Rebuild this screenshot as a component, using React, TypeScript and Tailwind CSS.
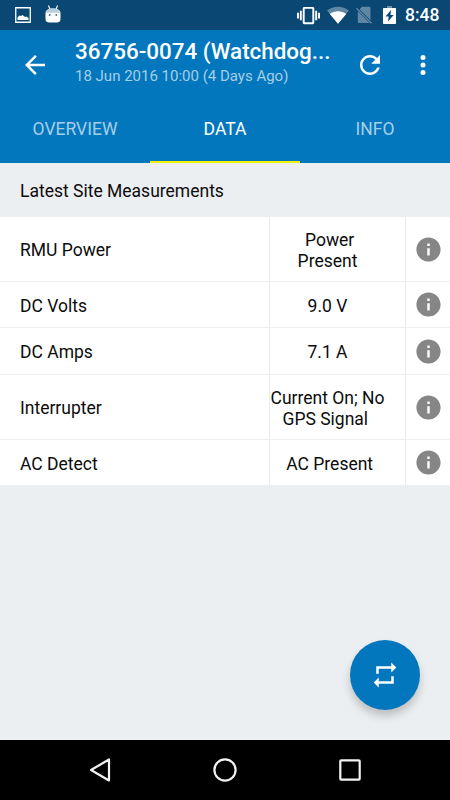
import { ReactNode } from "react";
import clsx from "clsx";

type Measurement = {
  label: string;
  lines: string[];
  height: string;
};

const measurements: Measurement[] = [
  { label: "RMU Power", lines: ["\u00a0Power", "Present"], height: "h-[65px]" },
  { label: "DC Volts", lines: ["9.0 V"], height: "h-[46px]" },
  { label: "DC Amps", lines: ["7.1 A"], height: "h-[47px]" },
  { label: "Interrupter", lines: ["Current On; No", "GPS Signal\u00a0"], height: "h-[65px]" },
  { label: "AC Detect", lines: ["\u00a0AC Present"], height: "h-[46px]" },
];

const tabs = ["OVERVIEW", "DATA", "INFO"];

const Icon = ({ className, children }: { className?: string; children: ReactNode }) => (
  <svg viewBox="0 0 24 24" fill="currentColor" className={clsx("shrink-0", className)}>
    {children}
  </svg>
);

const StatusBar = () => (
  <div className="flex h-[30px] items-center bg-[#0a4873] text-white">
    <svg viewBox="0 0 16 16" className="ml-[14.500px] size-4 shrink-0">
      <path d="M.75.75h14.5v14.5H.75z" fill="none" stroke="currentColor" strokeWidth="1.300" />
      <path d="M2.500 13v-2.500L4.500 8.500l1.500.5 1.500-1 2.500 2 1.500-.5 2 1.500v2z" fill="currentColor" />
    </svg>
    <svg viewBox="0 0 16 18" className="-mt-[2px] ml-[14.500px] h-[18px] w-4 shrink-0" fill="currentColor">
      <path d="M3.500.5l1.500 4M12.500.5l-1.500 4" stroke="currentColor" strokeWidth="1.100" />
      <path d="M.5 8.500C.5 5 3 3.500 8 3.500s7.500 1.500 7.500 5v5c0 3-1.500 4-4 4h-7c-2.500 0-4-1-4-4z" />
      <path d="M1.500 6C3 4.300 5 3.500 8 3.500S13 4.300 14.500 6L15 7.800H1z" fill="#b9cedd" />
      <circle cx="4.700" cy="10" r="1" fill="#47708f" />
      <circle cx="11.300" cy="10" r="1" fill="#47708f" />
    </svg>
    <Icon className="ml-auto size-[23px]">
      <path d="M0 15h2V9H0v6zm3 2h2V7H3v10zm19-8v6h2V9h-2zm-3 8h2V7h-2v10zM16.500 3h-9C6.670 3 6 3.670 6 4.500v15c0 .83.67 1.500 1.500 1.500h9c.83 0 1.500-.67 1.500-1.500v-15c0-.83-.67-1.500-1.500-1.500zM16 19H8V5h8v14z" />
    </Icon>
    <svg viewBox="0 0 22 18" className="ml-[7px] h-[18px] w-[22px] shrink-0" fill="currentColor">
      <path d="M0 4.500C6-.6 16-.6 22 4.500L11 17.700z" opacity=".35" />
      <path d="M2.800 8C7.500 4.200 14.500 4.200 19.200 8L11 17.700z" />
    </svg>
    <svg viewBox="0 0 16 18" className="ml-[7px] h-[18px] w-4 shrink-0" fill="currentColor">
      <path d="M6 .8h7c1 0 1.500.5 1.500 1.500v12L3.600 3.200zM1.800 5.200L13.600 17H3.300c-1 0-1.500-.5-1.500-1.500z" opacity=".35" />
      <path d="M.5 2.200l15 15" stroke="currentColor" strokeWidth="1.300" opacity=".35" />
    </svg>
    <svg viewBox="0 0 13 18" className="ml-[11px] h-[18px] w-[13px] shrink-0" fill="currentColor">
      <path d="M4 0h5v2H4z" opacity=".4" />
      <path d="M1 2h11c.6 0 1 .4 1 1v14c0 .6-.4 1-1 1H1c-.6 0-1-.4-1-1V3c0-.6.4-1 1-1z" />
      <path d="M8 4L2.500 10.500h3.200L5 15.500 10.700 9H7.500z" fill="#0a4873" />
    </svg>
    <span className="ml-[9px] mr-[11px] w-[34px] whitespace-nowrap text-[17.500px] font-medium leading-5">8:48</span>
  </div>
);

const AppBar = () => (
  <div className="flex h-[70px] items-center text-white">
    <Icon className="ml-5 size-[30px]">
      <path d="M20 11H7.830l5.590-5.590L12 4l-8 8 8 8 1.410-1.410L7.830 13H20v-2z" />
    </Icon>
    <div className="-mt-[5px] ml-[25px] w-[262px] whitespace-nowrap">
      <h1 className="text-[22.400px] font-medium leading-[26px]">36756-0074 (Watchdog...</h1>
      <p className="mt-px text-[15px] leading-[22px] text-[#a6cee7]">18 Jun 2016 10:00 (4 Days Ago)</p>
    </div>
    <Icon className="ml-[18px] size-[30px]">
      <path d="M17.650 6.350C16.200 4.900 14.210 4 12 4c-4.420 0-7.990 3.580-7.990 8s3.570 8 7.990 8c3.730 0 6.840-2.550 7.730-6h-2.080c-.82 2.330-3.040 4-5.650 4-3.310 0-6-2.690-6-6s2.690-6 6-6c1.660 0 3.140.69 4.220 1.780L13 11h7V4l-2.350 2.350z" />
    </Icon>
    <Icon className="ml-[22.500px] size-[30px]">
      <circle cx="12" cy="6" r="2" />
      <circle cx="12" cy="12" r="2" />
      <circle cx="12" cy="18" r="2" />
    </Icon>
  </div>
);

const Row = ({ label, lines, height }: Measurement) => (
  <div className={clsx("flex border-b border-[#eceff1] bg-white", height)}>
    <div className="flex w-[269px] items-center pl-5 pt-[3px]">{label}</div>
    <div className="flex w-[136px] flex-col items-center justify-center border-l border-[#e8ebed] pr-5 pt-[3px]">
      {lines.map((line) => (
        <span key={line} className="whitespace-nowrap leading-[20.500px]">{line}</span>
      ))}
    </div>
    <div className="flex flex-1 items-center justify-center border-l border-[#e8ebed]">
      <Icon className="size-[29px] text-[#868686]">
        <path d="M12 2C6.480 2 2 6.480 2 12s4.480 10 10 10 10-4.480 10-10S17.520 2 12 2zm1 15h-2v-6h2v6zm0-8h-2V7h2v2z" />
      </Icon>
    </div>
  </div>
);

const App = () => {
  const activeTab = "DATA";

  return (
    <div className="flex h-[800px] w-[450px] flex-col overflow-hidden bg-[#eceff1] font-[Roboto,sans-serif] text-[17.500px] text-[#0c0c0c]">
      <StatusBar />
      <header className="h-[133px] bg-[#0277bd]">
        <AppBar />
        <nav className="grid h-[63px] grid-cols-3">
          {tabs.map((tab) => (
            <button
              key={tab}
              className={clsx(
                "border-b-2 pb-[3px]",
                tab === activeTab ? "border-[#f0f400] text-white" : "border-transparent text-[#a6cee7]"
              )}
            >
              {tab}
            </button>
          ))}
        </nav>
      </header>

      <main className="relative flex-1">
        <h2 className="flex h-[54px] items-center pl-5 pt-0.5">Latest Site Measurements</h2>
        {measurements.map((m) => (
          <Row key={m.label} {...m} />
        ))}
        <button className="absolute bottom-[30px] right-[30px] flex size-[70px] items-center justify-center rounded-full bg-[#0277bd] text-white shadow-[0_6px_9px_rgba(0,0,0,0.2)]">
          <Icon className="size-[30px]">
            <path d="M7 7h10v3l4-4-4-4v3H5v6h2V7zm10 10H7v-3l-4 4 4 4v-3h12v-6h-2v4z" />
          </Icon>
        </button>
      </main>

      <footer className="grid h-[60px] grid-cols-3 items-center bg-black px-[37px] text-[#f2f2f2]">
        <svg viewBox="0 0 26 26" className="size-[26px] justify-self-center" fill="none" stroke="currentColor" strokeWidth="2.200" strokeLinejoin="round">
          <path d="M22 2.500v21L4 13z" />
        </svg>
        <svg viewBox="0 0 26 26" className="size-[26px] justify-self-center" fill="none" stroke="currentColor" strokeWidth="2.200">
          <circle cx="13" cy="13" r="10.600" />
        </svg>
        <svg viewBox="0 0 26 26" className="size-[26px] justify-self-center" fill="none" stroke="currentColor" strokeWidth="2.200">
          <rect x="3.300" y="3.300" width="19.400" height="19.400" rx="1" />
        </svg>
      </footer>
    </div>
  );
};

export default App;
